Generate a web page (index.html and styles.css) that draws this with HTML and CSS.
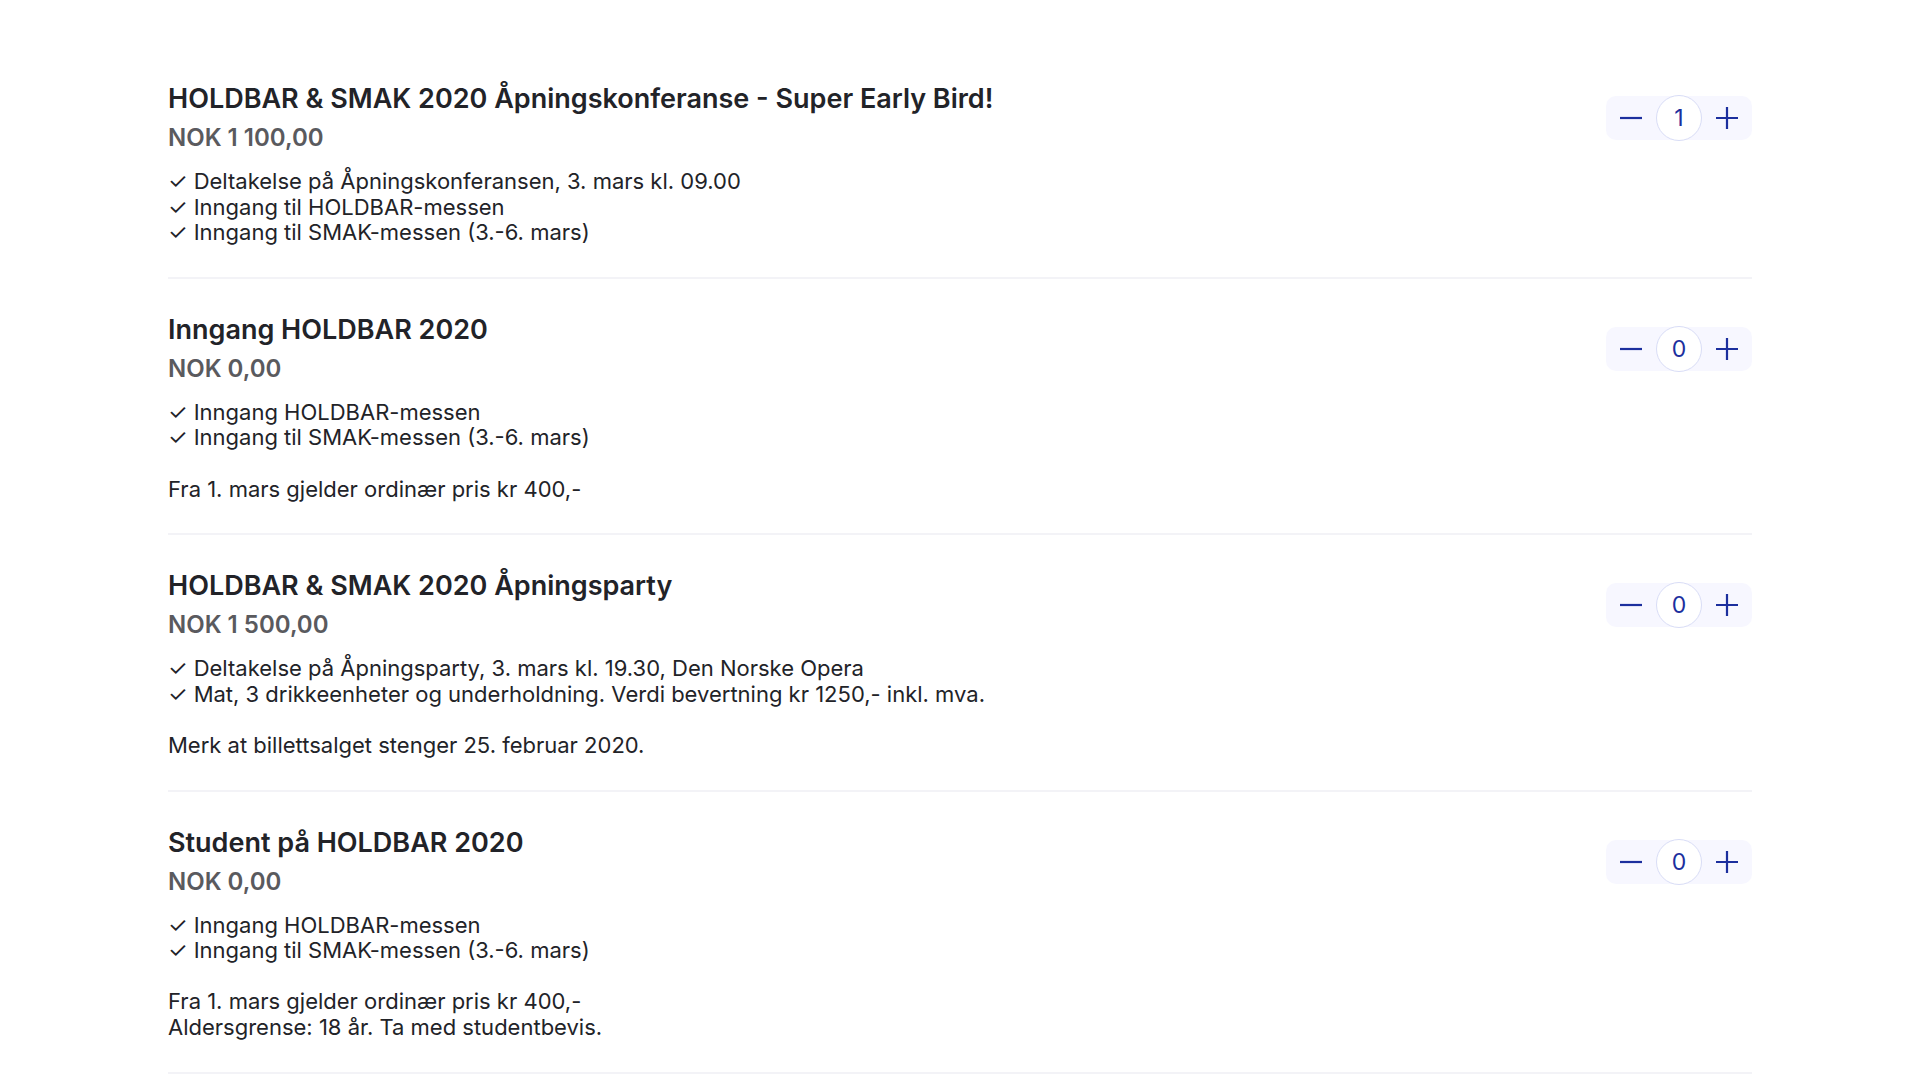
FILE: index.html
```html
<!DOCTYPE html>
<html lang="no">
<head>
  <meta charset="UTF-8">
  <meta name="viewport" content="width=device-width, initial-scale=1.0">
  <title>Billetter - HOLDBAR &amp; SMAK 2020</title>
  <link rel="stylesheet" href="styles.css">
</head>
<body>
  <div class="tickets">

    <div class="ticket">
      <div class="ticket-info">
        <h2 class="ticket-name">HOLDBAR &amp; SMAK 2020 Åpningskonferanse - Super Early Bird!</h2>
        <div class="ticket-price">NOK 1 100,00</div>
        <div class="ticket-desc">✓ Deltakelse på Åpningskonferansen, 3. mars kl. 09.00
✓ Inngang til HOLDBAR-messen
✓ Inngang til SMAK-messen (3.-6. mars)</div>
      </div>
      <div class="stepper">
        <button class="step-btn" aria-label="Fjern">
          <svg viewBox="0 0 24 24" width="24" height="24"><path d="M1 12h22" /></svg>
        </button>
        <span class="count">1</span>
        <button class="step-btn" aria-label="Legg til">
          <svg viewBox="0 0 24 24" width="24" height="24"><path d="M1 12h22M12 1v22" /></svg>
        </button>
      </div>
    </div>

    <div class="ticket">
      <div class="ticket-info">
        <h2 class="ticket-name">Inngang HOLDBAR 2020</h2>
        <div class="ticket-price">NOK 0,00</div>
        <div class="ticket-desc">✓ Inngang HOLDBAR-messen
✓ Inngang til SMAK-messen (3.-6. mars)

Fra 1. mars gjelder ordinær pris kr 400,-</div>
      </div>
      <div class="stepper">
        <button class="step-btn" aria-label="Fjern">
          <svg viewBox="0 0 24 24" width="24" height="24"><path d="M1 12h22" /></svg>
        </button>
        <span class="count">0</span>
        <button class="step-btn" aria-label="Legg til">
          <svg viewBox="0 0 24 24" width="24" height="24"><path d="M1 12h22M12 1v22" /></svg>
        </button>
      </div>
    </div>

    <div class="ticket">
      <div class="ticket-info">
        <h2 class="ticket-name">HOLDBAR &amp; SMAK 2020 Åpningsparty</h2>
        <div class="ticket-price">NOK 1 500,00</div>
        <div class="ticket-desc">✓ Deltakelse på Åpningsparty, 3. mars kl. 19.30, Den Norske Opera
✓ Mat, 3 drikkeenheter og underholdning. Verdi bevertning kr 1250,- inkl. mva.

Merk at billettsalget stenger 25. februar 2020.</div>
      </div>
      <div class="stepper">
        <button class="step-btn" aria-label="Fjern">
          <svg viewBox="0 0 24 24" width="24" height="24"><path d="M1 12h22" /></svg>
        </button>
        <span class="count">0</span>
        <button class="step-btn" aria-label="Legg til">
          <svg viewBox="0 0 24 24" width="24" height="24"><path d="M1 12h22M12 1v22" /></svg>
        </button>
      </div>
    </div>

    <div class="ticket">
      <div class="ticket-info">
        <h2 class="ticket-name">Student på HOLDBAR 2020</h2>
        <div class="ticket-price">NOK 0,00</div>
        <div class="ticket-desc">✓ Inngang HOLDBAR-messen
✓ Inngang til SMAK-messen (3.-6. mars)

Fra 1. mars gjelder ordinær pris kr 400,-
Aldersgrense: 18 år. Ta med studentbevis.</div>
      </div>
      <div class="stepper">
        <button class="step-btn" aria-label="Fjern">
          <svg viewBox="0 0 24 24" width="24" height="24"><path d="M1 12h22" /></svg>
        </button>
        <span class="count">0</span>
        <button class="step-btn" aria-label="Legg til">
          <svg viewBox="0 0 24 24" width="24" height="24"><path d="M1 12h22M12 1v22" /></svg>
        </button>
      </div>
    </div>

  </div>
</body>
</html>
```

FILE: styles.css
```css
body {
  font-family: Inter, "Noto Sans", sans-serif;
  margin: 0;
  padding: 0;
  color: #222328;
  background: #fff;
}

.tickets {
  max-width: 1584px;
  margin: 0 auto;
  padding-top: 48px;
}

.ticket {
  display: flex;
  justify-content: space-between;
  align-items: flex-start;
  padding: 35px 0 31px;
  border-bottom: 2px solid #f3f3f7;
}

.ticket-name {
  margin: 0;
  font-size: 27px;
  font-weight: 600;
  line-height: 31px;
  color: #222328;
}

.ticket-price {
  margin-top: 10px;
  font-size: 24px;
  font-weight: 600;
  line-height: 28px;
  color: #5a5a5e;
}

.ticket-desc {
  margin-top: 17px;
  font-size: 22px;
  line-height: 25.6px;
  white-space: pre-line;
}

.stepper {
  display: flex;
  align-items: center;
  justify-content: space-between;
  width: 146px;
  height: 44px;
  margin-top: 13px;
  background: #f7f7ff;
  border-radius: 10px;
}

.step-btn {
  width: 50px;
  height: 44px;
  padding: 0;
  border: none;
  background: none;
  cursor: pointer;
  display: flex;
  align-items: center;
  justify-content: center;
}

.step-btn svg {
  stroke: #1c2f9e;
  stroke-width: 2.2;
  fill: none;
}

.count {
  width: 44px;
  height: 44px;
  border: 1.5px solid #d9ddf6;
  border-radius: 50%;
  background: #fff;
  color: #1c2f9e;
  font-size: 23px;
  display: flex;
  align-items: center;
  justify-content: center;
  flex-shrink: 0;
}
```
